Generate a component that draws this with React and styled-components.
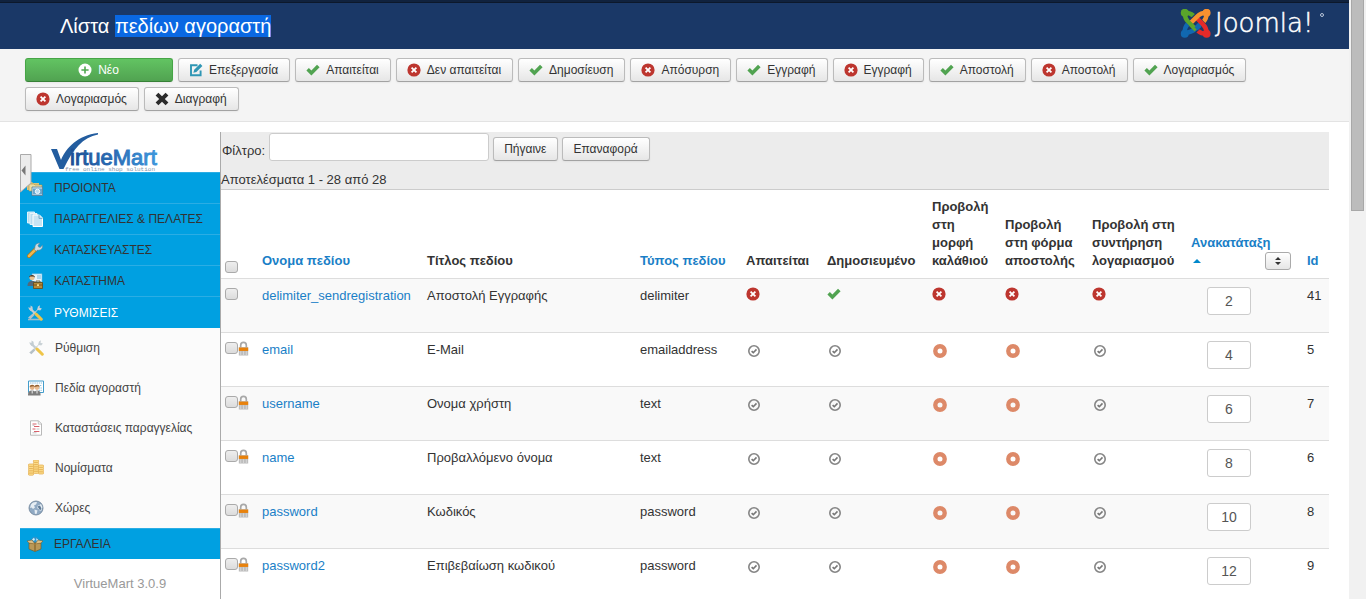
import React from 'react'
import styled, { createGlobalStyle, css } from 'styled-components'

const GlobalStyle = createGlobalStyle`
  *, *::before, *::after {
    box-sizing: border-box;
  }

  body {
    margin: 0;
    background: white;
    color: #333;
    font-family: 'Liberation Sans', Arial, sans-serif;
    font-size: 13px;
    line-height: 18px;
  }

  button,
  input {
    font-family: inherit;
  }
`

// State and toolbar icons
const PlusIcon = () => (
  <Icon viewBox="0 0 14 14">
    <circle cx="7" cy="7" r="6.5" fill="white" />
    <path d="M7 3.4v7.2M3.4 7h7.2" stroke="#51a851" strokeWidth="1.6" />
  </Icon>
)

const EditIcon = () => (
  <Icon viewBox="0 0 14 14">
    <path d="M8.5 2.2H2v10h9.6V7.5" fill="none" stroke="#2f96b4" strokeWidth="1.9" />
    <path d="M4.4 9.8l.8-3L11.2.8l2.2 2.2-6 6z" fill="#2f96b4" />
  </Icon>
)

const CheckIcon = () => (
  <Icon viewBox="0 0 14 14">
    <path d="M.4 7.6l2.5-2.5 2.5 2.3L11 1.8l2.6 2.4-8.2 8.2z" fill="#51a351" />
  </Icon>
)

const CancelIcon = () => (
  <Icon viewBox="0 0 14 14">
    <circle cx="7" cy="7" r="6.6" fill="#bd362f" />
    <path d="M4.6 4.6l4.8 4.8M9.4 4.6L4.6 9.4" stroke="white" strokeWidth="1.8" />
  </Icon>
)

const DeleteIcon = () => (
  <Icon viewBox="0 0 14 14">
    <path
      d="M.6 3.4L3.4.8 7 4.2 10.6.8l2.8 2.6L9.8 7l3.6 3.6-2.8 2.6L7 9.8l-3.6 3.4-2.8-2.6L4.2 7z"
      fill="#2b2b2b"
    />
  </Icon>
)

const LockedCheckIcon = () => (
  <StateIcon viewBox="0 0 16 16">
    <circle cx="8" cy="8" r="5.2" fill="none" stroke="#858585" strokeWidth="1.6" />
    <path d="M5.6 8.1l1.7 1.6 3.2-3.3" fill="none" stroke="#777" strokeWidth="1.6" />
  </StateIcon>
)

const LockedOffIcon = () => (
  <StateIcon viewBox="0 0 16 16">
    <circle cx="8" cy="8" r="4.7" fill="none" stroke="#dd8968" strokeWidth="4.4" />
  </StateIcon>
)

const LockIcon = () => (
  <Lock viewBox="0 0 11 16">
    <path d="M2.5 8V4.4a3 3 0 016 0V8" fill="none" stroke="#a8a8a8" strokeWidth="1.8" />
    <path d="M.5 6.5h10v9H.5z" fill="#bdbdbd" />
    <path d="M2.5 11v4M5.5 11v4M8.5 11v4" stroke="#d6d6d6" strokeWidth="1" />
    <path d="M.5 7h10v3.6H.5z" fill="#e8820c" />
  </Lock>
)

// Sidebar icons
const ProductsIcon = () => (
  <MenuSvg viewBox="0 0 16 16">
    <path d="M0 2h5l1 1h6v7H0z" fill="#d9c47c" />
    <path d="M2 4h5l1 1h7v6H2z" fill="#efdfa0" stroke="#a89048" strokeWidth=".6" />
    <path d="M5 7h10.5v8.5H5z" fill="#dce9f0" stroke="#527a94" strokeWidth=".8" />
    <path d="M6 8.5h9v6H6z" fill="#6aa6cc" />
    <circle cx="10.5" cy="11.4" r="2.2" fill="#b9dcf2" stroke="white" strokeWidth=".9" />
  </MenuSvg>
)

const OrdersIcon = () => (
  <MenuSvg viewBox="0 0 16 16">
    <path d="M.5 1h7v11h-7z" fill="#b8dcee" stroke="#eaf7fd" strokeWidth=".9" />
    <path d="M3 2.5h7v11H3z" fill="#b8dcee" stroke="#eaf7fd" strokeWidth=".9" />
    <path d="M6 4h6.5l3 3v8.5H6z" fill="#c7e4f3" stroke="white" />
    <path d="M12 4v3.4h3.5" fill="none" stroke="#5e9ab8" strokeWidth=".8" />
  </MenuSvg>
)

const WrenchIcon = () => (
  <MenuSvg viewBox="0 0 16 16">
    <path d="M2 14l7-7" stroke="#a67516" strokeWidth="4" strokeLinecap="round" />
    <path d="M2 14l7-7" stroke="#edb751" strokeWidth="2.6" strokeLinecap="round" />
    <path
      d="M8 6.5C7.5 3 9.5.8 13 1.2L11 3.3l.5 1.6 1.7.5L15.4 3.3c.6 3-1.6 5.5-5 4.8L9.3 9.2 7.2 7.3z"
      fill="#cfdde4"
      stroke="#6e8592"
      strokeWidth=".6"
    />
  </MenuSvg>
)

const ShopIcon = () => (
  <MenuSvg viewBox="0 0 16 16">
    <path d="M5 .8h10V9H5z" fill="#e6f5fd" stroke="#5fb4dd" strokeWidth=".6" />
    <path d="M10 3h4M10 5h4" stroke="#74b8dc" />
    <path d="M.5 13c0-4 2-5 5-5s4 2 4 5z" fill="#53697a" />
    <circle cx="5" cy="4.6" r="2.6" fill="#e6c090" />
    <path d="M2 4.5C2 1 8 1 8 4.5L6.5 3.5H3.4z" fill="#3f342a" />
    <path d="M6.5 9.5h9v6h-9z" fill="#b98a36" stroke="#684a14" strokeWidth=".8" />
    <path d="M9 9.2V8h4v1.2M6.5 12h9" fill="none" stroke="#684a14" strokeWidth=".8" />
    <path d="M10 11.3h2v1.6h-2z" fill="#f4dd8c" />
  </MenuSvg>
)

const ToolsIcon = ({ base }) => (
  <MenuSvg viewBox="0 0 16 16">
    {base && <path d="M1 14.5h13" stroke="#9dbccb" strokeWidth="1.6" />}
    <path d="M3 3.5l9.5 9" stroke="#c3cdd2" strokeWidth="2.4" />
    <path d="M1 2.5l2.6.3L3.5.5l2 1.3.3 3-2.3 1.3z" fill="#c3cdd2" />
    <path d="M11 1.5l2-1.2-.5 2.5 2.4.6-1.7 2-2.3-.3-7.6 8.2L1 12.8 10 5z" fill="#c9d1d5" />
    <path d="M9 9l5.3 5.2" stroke="#efc548" strokeWidth="3" strokeLinecap="round" />
    <path d="M2.5 13.5l4-4" stroke="#b5c0c6" strokeWidth="2.4" />
  </MenuSvg>
)

const ShopperIcon = () => (
  <MenuSvg viewBox="0 0 16 16">
    <path d="M.5 1h15v11.5H.5z" fill="white" stroke="#429ccb" />
    <path d="M2 3h12M9.5 5.5H14M11 8h3M11 10.3h3" stroke="#8bbfda" strokeDasharray="1.5 .7" />
    <path d="M0 15.5c0-4 1.5-5 4-5s3.6 1 4 5zM6 15.5c0-4 1.5-5 3.4-5 2 0 3.2 1 3.2 5z" fill="#7c7c7c" />
    <circle cx="4.2" cy="7.6" r="2.4" fill="#e2b286" />
    <circle cx="9" cy="7.6" r="2.4" fill="#e7bc92" />
    <path d="M1.6 7C1.7 4 6.7 4 6.7 7l-1.5-.8zM6.6 7c0-3 5-3 5 0l-1.6-.8z" fill="#94602f" />
    <path d="M4.2 10.5v3M9 10.5v3" stroke="#eee" />
  </MenuSvg>
)

const StatusIcon = () => (
  <MenuSvg viewBox="0 0 16 16">
    <path d="M2.5.8h8l3 3v11.4h-11z" fill="white" stroke="#b9b9b9" />
    <path d="M10.3.8v3.3h3.2" fill="none" stroke="#b9b9b9" strokeWidth=".8" />
    <path d="M4.5 4h4M6 6.5h5.4M4.5 9h3M6 11.5h5.4" stroke="#d8616b" />
    <path d="M4.5 5.3h2M8.5 9h3M4.5 12.8h4" stroke="#b5b5b5" strokeWidth=".8" />
  </MenuSvg>
)

const CoinsIcon = () => (
  <MenuSvg viewBox="0 0 16 16">
    {[[5, 0, 6], [0, 4, 5], [10, 5, 4]].map(([x, y, count]) => (
      <g key={x} fill="#fbdc8b" stroke="#e3aa48" strokeWidth=".7">
        {Array.from({ length: count }, (_, i) => (
          <rect key={i} x={x + 0.4} y={y + (count - 1 - i) * 2.2} width="5.2" height="2.4" rx="1" />
        ))}
      </g>
    ))}
  </MenuSvg>
)

const GlobeIcon = () => (
  <MenuSvg viewBox="0 0 16 16">
    <circle cx="8" cy="8" r="7" fill="#8fa9c3" stroke="#75899d" strokeWidth=".9" />
    <path d="M3 4.5C5 2 8 1.6 9 2.4L8 4.6 6 5.5l1 2L5 9 3.6 7.4 2 8zM9.5 6l3.5-2 1.4 3-1 3.5-1.5.6-1-2.1-1.6-.7zM6.5 9.5l3 1-1 3.5-1.6-.3z" fill="#e6edf3" />
    <path d="M9.5 6.5l2.5-1 1.4 3-1.2 2z" fill="#5e7a96" />
  </MenuSvg>
)

const BoxIcon = () => (
  <MenuSvg viewBox="0 0 16 16">
    <circle cx="8" cy="5" r="4.3" fill="#2d94cc" />
    <path d="M5 3.6l2-1.8.9 1.7L7 5zM9 2.2l2.2 1.6L10 6z" fill="#d5effb" />
    <path d="M2 7h12v6l-6 2.6L2 13z" fill="#b99857" stroke="#76571d" strokeWidth=".6" />
    <path d="M2 7L0 5l5-1 3 4zM14 7l2-2-5-1-3 4z" fill="#dbc08a" stroke="#76571d" strokeWidth=".5" />
    <path d="M8 8.5V15" stroke="#76571d" />
  </MenuSvg>
)

const JoomlaLogo = () => (
  <Brand viewBox="0 0 150 34" role="img" aria-label="Joomla!">
    <g transform="translate(1 -1) scale(.95)">
      <g fill="none" strokeWidth="4.8">
        <path d="M5 26c6 0 9-2 11-4l7-7" stroke="#1168b0" />
        <path d="M28 26c0-5-2-7-4-9l-7-7" stroke="#e42a29" />
        <path d="M28 5c-6 0-8 2-10 4l-8 8" stroke="#f9912f" />
        <path d="M5 5c0 6 2 8 4 10l8 8" stroke="#5aa42b" />
        <path d="M5 5c5 0 7 1 9 3" stroke="#5aa42b" />
        <path d="M28 5c0 5-1 7-3 9" stroke="#f9912f" />
        <path d="M28 27c-5 0-7-1-9-3" stroke="#e42a29" />
        <path d="M5 26c0-5 1-7 3-9" stroke="#1168b0" />
        <path d="M17 22l4-4" stroke="#1168b0" />
      </g>
      <circle cx="5" cy="5" r="4.2" fill="#5aa42b" />
      <circle cx="28" cy="5" r="4.2" fill="#f9912f" />
      <circle cx="5" cy="27" r="4.2" fill="#1168b0" />
      <circle cx="28" cy="27" r="4.2" fill="#e42a29" />
    </g>
    <text
      x="36"
      y="23"
      fill="white"
      stroke="white"
      strokeWidth=".5"
      fontSize="26"
      fontWeight="200"
      fontFamily="'DejaVu Sans Light', 'DejaVu Sans', sans-serif"
    >
      Joomla!
    </text>
    <circle cx="143" cy="6" r="1.5" fill="none" stroke="#b9c5d8" />
  </Brand>
)

const VirtueMartLogo = () => (
  <ShopLogo viewBox="0 0 110 40" role="img" aria-label="VirtueMart">
    <defs>
      <linearGradient id="vm" x1="0" x2="1" y1="0" y2="0">
        <stop offset="0" stopColor="#1c4f94" />
        <stop offset=".5" stopColor="#2a6cb4" />
        <stop offset="1" stopColor="#3d97dc" />
      </linearGradient>
    </defs>
    <path d="M1 17h6l4 11C16 16 28 3 48 1v1.4C33 5 23 17 13.5 37h-4z" fill="#235d9f" />
    <text x="20" y="33" fill="url(#vm)" stroke="url(#vm)" strokeWidth="1" fontSize="22">
      irtueMart
    </text>
    <text x="15" y="39" fill="#8796ab" fontSize="6" fontFamily="'Liberation Mono', monospace">
      free online shop solution
    </text>
  </ShopLogo>
)

const toolbar = [
  { label: 'Νέο', icon: PlusIcon, primary: true },
  { label: 'Επεξεργασία', icon: EditIcon },
  { label: 'Απαιτείται', icon: CheckIcon },
  { label: 'Δεν απαιτείται', icon: CancelIcon },
  { label: 'Δημοσίευση', icon: CheckIcon },
  { label: 'Απόσυρση', icon: CancelIcon },
  { label: 'Εγγραφή', icon: CheckIcon },
  { label: 'Εγγραφή', icon: CancelIcon },
  { label: 'Αποστολή', icon: CheckIcon },
  { label: 'Αποστολή', icon: CancelIcon },
  { label: 'Λογαριασμός', icon: CheckIcon },
  { label: 'Λογαριασμός', icon: CancelIcon },
  { label: 'Διαγραφή', icon: DeleteIcon },
]

const menu = [
  { label: 'ΠΡΟΙΟΝΤΑ', icon: <ProductsIcon /> },
  { label: 'ΠΑΡΑΓΓΕΛΙΕΣ & ΠΕΛΑΤΕΣ', icon: <OrdersIcon /> },
  { label: 'ΚΑΤΑΣΚΕΥΑΣΤΕΣ', icon: <WrenchIcon /> },
  { label: 'ΚΑΤΑΣΤΗΜΑ', icon: <ShopIcon /> },
  {
    label: 'ΡΥΘΜΙΣΕΙΣ',
    icon: <ToolsIcon base />,
    active: true,
    items: [
      { label: 'Ρύθμιση', icon: <ToolsIcon /> },
      { label: 'Πεδία αγοραστή', icon: <ShopperIcon /> },
      { label: 'Καταστάσεις παραγγελίας', icon: <StatusIcon /> },
      { label: 'Νομίσματα', icon: <CoinsIcon /> },
      { label: 'Χώρες', icon: <GlobeIcon /> },
    ],
  },
  { label: 'ΕΡΓΑΛΕΙΑ', icon: <BoxIcon /> },
]

const fields = [
  { name: 'delimiter_sendregistration', title: 'Αποστολή Εγγραφής', type: 'delimiter', order: 2, id: 41, open: true },
  { name: 'email', title: 'E-Mail', type: 'emailaddress', order: 4, id: 5 },
  { name: 'username', title: 'Ονομα χρήστη', type: 'text', order: 6, id: 7 },
  { name: 'name', title: 'Προβαλλόμενο όνομα', type: 'text', order: 8, id: 6 },
  { name: 'password', title: 'Κωδικός', type: 'password', order: 10, id: 8 },
  { name: 'password2', title: 'Επιβεβαίωση κωδικού', type: 'password', order: 12, id: 9 },
]

const Toolbar = () => (
  <ToolbarWrapper>
    {toolbar.map(({ label, icon: ButtonIcon, primary }, index) => (
      <Button key={index} type="button" $primary={primary}>
        <ButtonIcon />
        {label}
      </Button>
    ))}
  </ToolbarWrapper>
)

const Sidebar = () => (
  <SidebarWrapper>
    <VirtueMartLogo />
    <CollapseButton type="button" aria-label="Απόκρυψη μενού">
      <svg width="12" height="39" viewBox="0 0 12 39">
        <path d="M.5.5h10.5v28.5L.5 38z" fill="#ececec" stroke="#aaa" />
        <path d="M5.5 11.5v10l-4-5z" fill="#777" />
      </svg>
    </CollapseButton>
    <nav>
      {menu.map(({ label, icon, active, items }) => (
        <React.Fragment key={label}>
          <MenuLink href="#" $active={active}>
            {icon}
            {label}
          </MenuLink>
          {items && items.map(item => (
            <SubLink href="#" key={item.label}>
              {item.icon}
              {item.label}
            </SubLink>
          ))}
        </React.Fragment>
      ))}
    </nav>
    <Version>VirtueMart 3.0.9</Version>
  </SidebarWrapper>
)

const FieldRow = ({ name, title, type, order, id, open }) => {
  const off = open ? <CancelIcon /> : <LockedOffIcon />
  return (
    <tr>
      <Cell>
        <Checks>
          <Checkbox type="checkbox" aria-label={name} />
          {!open && <LockIcon />}
        </Checks>
      </Cell>
      <Cell><Link href="#">{name}</Link></Cell>
      <Cell>{title}</Cell>
      <Cell>{type}</Cell>
      <Cell>{open ? <CancelIcon /> : <LockedCheckIcon />}</Cell>
      <Cell>{open ? <CheckIcon /> : <LockedCheckIcon />}</Cell>
      <Cell>{off}</Cell>
      <Cell>{off}</Cell>
      <Cell>{open ? <CancelIcon /> : <LockedCheckIcon />}</Cell>
      <Cell>
        <OrderInput type="text" defaultValue={order} aria-label={`Ανακατάταξη ${name}`} />
      </Cell>
      <Cell>{id}</Cell>
    </tr>
  )
}

const FieldTable = () => (
  <Table>
    <colgroup>
      <Col $width={36} />
      <Col $width={165} />
      <Col />
      <Col $width={106} />
      <Col $width={81} />
      <Col $width={105} />
      <Col $width={73} />
      <Col $width={87} />
      <Col $width={99} />
      <Col $width={116} />
      <Col $width={27} />
    </colgroup>
    <thead>
      <tr>
        <HeadCell><Checkbox type="checkbox" aria-label="Επιλογή όλων" /></HeadCell>
        <HeadCell><Link href="#">Ονομα πεδίου</Link></HeadCell>
        <HeadCell>Τίτλος πεδίου</HeadCell>
        <HeadCell><Link href="#">Τύπος πεδίου</Link></HeadCell>
        <HeadCell>Απαιτείται</HeadCell>
        <HeadCell>Δημοσιευμένο</HeadCell>
        <HeadCell>Προβολή στη μορφή καλάθιού</HeadCell>
        <HeadCell>Προβολή στη φόρμα αποστολής</HeadCell>
        <HeadCell>Προβολή στη συντήρηση λογαριασμού</HeadCell>
        <HeadCell>
          <Link href="#">Ανακατάταξη</Link>
          <SortTools>
            <svg width="8" height="4" viewBox="0 0 8 4">
              <path d="M0 4l4-4 4 4z" fill="#08c" />
            </svg>
            <SaveOrder type="button" aria-label="Αποθήκευση σειράς">
              <svg width="6" height="8" viewBox="0 0 6 8">
                <path d="M0 3l3-3 3 3zM0 5l3 3 3-3z" fill="#333" />
              </svg>
            </SaveOrder>
          </SortTools>
        </HeadCell>
        <HeadCell><Link href="#">Id</Link></HeadCell>
      </tr>
    </thead>
    <tbody>
      {fields.map(field => <FieldRow key={field.name} {...field} />)}
    </tbody>
  </Table>
)

const App = () => (
  <Shell>
    <GlobalStyle />
    <Page>
      <TopStrip />
      <Header>
        <Title>Λίστα <Selected>πεδίων αγοραστή</Selected></Title>
        <JoomlaLogo />
      </Header>
      <Toolbar />
      <Content>
        <Sidebar />
        <Main>
          <FilterPanel>
            <FilterRow>
              <FilterLabel htmlFor="filter">Φίλτρο:</FilterLabel>
              <FilterInput id="filter" type="text" />
              <Button type="button">Πήγαινε</Button>
              <Button type="button">Επαναφορά</Button>
            </FilterRow>
            <div>Αποτελέσματα 1 - 28 από 28</div>
          </FilterPanel>
          <FieldTable />
        </Main>
      </Content>
    </Page>
    <ScrollTrack>
      <ScrollThumb />
    </ScrollTrack>
  </Shell>
)

export default App

const Shell = styled.div`
  display: grid;
  grid-template-columns: minmax(0, 1fr) 17px;
  height: 100vh;
  overflow: hidden;
`

const Page = styled.div`
  display: flex;
  flex-direction: column;
  min-height: 0;
  overflow: hidden;
`

const TopStrip = styled.div`
  flex: none;
  height: 3px;
  background: #10223e;
  border-bottom: 1px solid #0c182b;
`

const Header = styled.header`
  flex: none;
  display: flex;
  align-items: center;
  justify-content: space-between;
  height: 46px;
  padding: 0 20px 0 60px;
  background: #1a3867;
`

const Title = styled.h1`
  margin: 0;
  font-size: 20px;
  font-weight: normal;
  line-height: 22px;
  color: white;
`

const Selected = styled.span`
  background: #0a68e2;
`

const Brand = styled.svg`
  width: 150px;
  height: 34px;
`

const ToolbarWrapper = styled.div`
  flex: none;
  display: flex;
  flex-wrap: wrap;
  gap: 5px;
  padding: 9px 20px 10px 25px;
  background: #f4f4f4;
  border-bottom: 1px solid #e3e3e3;
`

const Button = styled.button`
  display: flex;
  align-items: center;
  justify-content: center;
  gap: 6px;
  height: 24px;
  padding: 0 11px 0 10px;

  font-size: 12px;
  line-height: 18px;
  color: #333;
  background: linear-gradient(white, #e6e6e6);
  border: 1px solid #bbb;
  border-bottom-color: #a2a2a2;
  border-radius: 3px;
  box-shadow: 0 1px 2px rgba(0, 0, 0, 0.05);

  ${({ $primary }) => $primary && css`
    width: 148px;
    color: white;
    background: linear-gradient(#62c462, #51a351);
    border-color: #46a546 #46a546 #378137;
  `};
`

const Icon = styled.svg`
  flex: none;
  display: block;
  width: 14px;
  height: 14px;
`

const Content = styled.div`
  flex: 1 1 auto;
  display: flex;
  padding: 10px 20px 0;
`

const SidebarWrapper = styled.aside`
  position: relative;
  flex: 0 0 200px;
`

const ShopLogo = styled.svg`
  display: block;
  width: 110px;
  height: 40px;
  margin-left: 30px;
`

const CollapseButton = styled.button`
  position: absolute;
  top: 22px;
  left: 0;
  padding: 0;
  line-height: 0;
  background: none;
  border: 0;
`

const MenuLink = styled.a`
  display: flex;
  align-items: center;
  gap: 11px;
  height: ${({ $active }) => ($active ? '32px' : '31px')};
  padding-left: 7px;

  font-size: 12px;
  text-decoration: none;
  color: ${({ $active }) => ($active ? 'white' : '#333')};
  background: #00a0e1;
  border-top: 1px solid #2bade4;
`

const SubLink = styled.a`
  display: flex;
  align-items: center;
  gap: 11px;
  height: 40px;
  padding-left: 8px;

  font-size: 12px;
  text-decoration: none;
  color: #444;
  background: #fbfbfb;
`

const MenuSvg = styled.svg`
  flex: none;
  width: 16px;
  height: 16px;
`

const Version = styled.div`
  padding-top: 16px;
  text-align: center;
  color: #999;
`

const Main = styled.main`
  flex: 1 1 auto;
  min-width: 0;
  border-left: 1px solid #aaa;
`

const FilterPanel = styled.div`
  display: flex;
  flex-direction: column;
  gap: 10px;
  padding-top: 1px;
  background: #ececec;
`

const FilterRow = styled.div`
  display: flex;
  align-items: flex-end;
  gap: 4px;
  padding-left: 1px;
`

const FilterLabel = styled.label`
  padding-bottom: 1px;
`

const FilterInput = styled.input`
  width: 220px;
  height: 28px;
  padding: 4px 6px;
  font-size: 13px;
  color: #555;
  background: white;
  border: 1px solid #ccc;
  border-radius: 3px;
`

const Table = styled.table`
  width: 100%;
  table-layout: fixed;
  border-collapse: collapse;

  tbody tr:nth-child(odd) {
    background: #f9f9f9;
  }
`

const Col = styled.col`
  width: ${({ $width }) => ($width ? `${$width}px` : 'auto')};
`

const HeadCell = styled.th`
  padding: 8px 4px 8px 5px;
  vertical-align: bottom;
  text-align: left;
  border-top: 1px solid #ccc;

  &:first-child {
    padding-bottom: 5px;
  }
`

const Cell = styled.td`
  padding: 8px 4px 8px 5px;
  vertical-align: top;
  white-space: nowrap;
  border-top: 1px solid #ddd;
`

const Link = styled.a`
  color: #1a7fc7;
  text-decoration: none;
`

const Checks = styled.div`
  display: flex;
  align-items: flex-start;
`

const Checkbox = styled.input`
  appearance: none;
  flex: none;
  display: block;
  width: 13px;
  height: 12px;
  margin: 1px 0 0 -1px;
  background: linear-gradient(#eee, #dcdcdc);
  border: 1px solid #aaa;
  border-radius: 3px;
`

const Lock = styled.svg`
  flex: none;
  width: 11px;
  height: 15px;
`

const StateIcon = styled.svg`
  display: block;
  width: 16px;
  height: 16px;
  margin-top: 2px;
`

const OrderInput = styled.input`
  display: block;
  width: 44px;
  height: 28px;
  margin: 0 0 9px 16px;
  padding: 0;
  font-size: 14px;
  text-align: center;
  color: #555;
  background: white;
  border: 1px solid #ccc;
  border-radius: 3px;
`

const SortTools = styled.div`
  display: flex;
  align-items: center;
  justify-content: space-between;
  height: 18px;
  padding: 0 7px 0 2px;
`

const SaveOrder = styled.button`
  display: flex;
  align-items: center;
  justify-content: center;
  width: 26px;
  height: 18px;
  padding: 0;
  background: linear-gradient(white, #e6e6e6);
  border: 1px solid #aaa;
  border-radius: 3px;
`

const ScrollTrack = styled.div`
  padding: 0 2px;
  background: #f1f1f1;
`

const ScrollThumb = styled.div`
  height: 211px;
  background: #bcbcbc;
  border: 1px solid #a8a8a8;
  border-top: 0;
`
